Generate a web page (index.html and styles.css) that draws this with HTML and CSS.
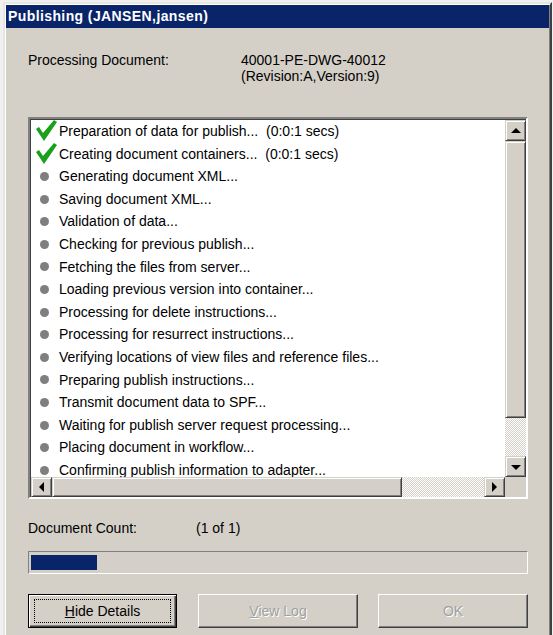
FILE: index.html
```html
<!DOCTYPE html>
<html>
<head>
<meta charset="utf-8">
<link rel="stylesheet" href="styles.css">
</head>
<body>
<div class="window">
  <div class="titlebar">Publishing (JANSEN,jansen)</div>
  <div class="content">
    <div class="doc-row">
      <div class="label">Processing Document:</div>
      <div class="value">40001-PE-DWG-40012<br>(Revision:A,Version:9)</div>
    </div>
    <div class="listbox">
      <div class="list-area">
        <ul class="items">
          <li><span class="ico"><svg width="22" height="22" viewBox="0 0 22 22"><polygon points="0,9 3,7 7,13 18,0 21,2 8,21" fill="#1aa01a"/></svg></span>Preparation of data for publish...&nbsp;&nbsp;(0:0:1 secs)</li>
          <li><span class="ico"><svg width="22" height="22" viewBox="0 0 22 22"><polygon points="0,9 3,7 7,13 18,0 21,2 8,21" fill="#1aa01a"/></svg></span>Creating document containers...&nbsp;&nbsp;(0:0:1 secs)</li>
          <li><span class="ico"><span class="dot"></span></span>Generating document XML...</li>
          <li><span class="ico"><span class="dot"></span></span>Saving document XML...</li>
          <li><span class="ico"><span class="dot"></span></span>Validation of data...</li>
          <li><span class="ico"><span class="dot"></span></span>Checking for previous publish...</li>
          <li><span class="ico"><span class="dot"></span></span>Fetching the files from server...</li>
          <li><span class="ico"><span class="dot"></span></span>Loading previous version into container...</li>
          <li><span class="ico"><span class="dot"></span></span>Processing for delete instructions...</li>
          <li><span class="ico"><span class="dot"></span></span>Processing for resurrect instructions...</li>
          <li><span class="ico"><span class="dot"></span></span>Verifying locations of view files and reference files...</li>
          <li><span class="ico"><span class="dot"></span></span>Preparing publish instructions...</li>
          <li><span class="ico"><span class="dot"></span></span>Transmit document data to SPF...</li>
          <li><span class="ico"><span class="dot"></span></span>Waiting for publish server request processing...</li>
          <li><span class="ico"><span class="dot"></span></span>Placing document in workflow...</li>
          <li><span class="ico"><span class="dot"></span></span>Confirming publish information to adapter...</li>
        </ul>
      </div>
      <div class="vscroll">
        <div class="sbtn"><span class="arr up"></span></div>
        <div class="vthumb"></div>
        <div class="track"></div>
        <div class="sbtn"><span class="arr down"></span></div>
      </div>
      <div class="hscroll">
        <div class="sbtn"><span class="arr left"></span></div>
        <div class="hthumb"></div>
        <div class="track"></div>
        <div class="sbtn"><span class="arr right"></span></div>
      </div>
      <div class="corner"></div>
    </div>
    <div class="count-row">
      <div class="label2">Document Count:</div>
      <div>(1 of 1)</div>
    </div>
    <div class="progress"><div class="fill"></div></div>
    <div class="buttons">
      <div class="btn default btn-hide"><span class="focus"><u>H</u>ide Details</span></div>
      <div class="btn disabled btn-log"><span><u>V</u>iew Log</span></div>
      <div class="btn disabled btn-ok"><span>OK</span></div>
    </div>
  </div>
</div>
</body>
</html>
```
FILE: styles.css
```css
html, body {
  margin: 0;
  padding: 0;
  background: #f0f0f0;
  overflow: hidden;
}
body {
  font-family: "Liberation Sans", Arial, sans-serif;
  font-size: 14px;
  color: #000;
}
.window {
  margin: 2px 0 0 3px;
  width: 543px;
  height: 650px;
  background: #d4d0c8;
  border: 2px solid;
  border-color: #e8e6e0 #404040 #404040 #e8e6e0;
  box-shadow: inset 1px 1px #fff, inset -1px -1px #808080;
  padding: 1px;
}
.titlebar {
  height: 23px;
  background: #0a246a;
  color: #fff;
  font-weight: bold;
  font-size: 14px;
  letter-spacing: 0.4px;
  line-height: 23px;
  padding-left: 2px;
}
.content {
  padding: 24px 21px 0 22px;
  display: flex;
  flex-direction: column;
}
.doc-row {
  display: flex;
  line-height: 16px;
}
.label {
  width: 213px;
}
.listbox {
  margin-top: 33px;
  height: 377px;
  border: 2px solid;
  border-color: #808080 #fff #fff #808080;
  box-shadow: inset 1px 1px #404040;
  padding: 1px 0 0 1px;
  display: grid;
  grid-template-columns: 1fr 21px;
  grid-template-rows: 1fr 20px;
  box-sizing: content-box;
}
.list-area {
  background: #fff;
  overflow: hidden;
}
.items {
  list-style: none;
  margin: 0;
  padding: 0;
}
.items li {
  height: 22.6px;
  line-height: 22.6px;
  display: flex;
  align-items: center;
  white-space: nowrap;
}
.ico {
  width: 28px;
  height: 22px;
  display: flex;
  align-items: center;
  padding-left: 5px;
  box-sizing: border-box;
}
.dot {
  width: 9px;
  height: 9px;
  border-radius: 50%;
  background: #7f7f7f;
  margin-left: 4px;
}
.vscroll {
  display: flex;
  flex-direction: column;
}
.hscroll {
  display: flex;
}
.sbtn {
  width: 21px;
  height: 21px;
  box-sizing: border-box;
  background: #d4d0c8;
  border: 1px solid;
  border-color: #d4d0c8 #404040 #404040 #d4d0c8;
  box-shadow: inset 1px 1px #fff, inset -1px -1px #808080;
  display: flex;
  align-items: center;
  justify-content: center;
  flex: none;
}
.hscroll .sbtn {
  height: 20px;
}
.vthumb {
  height: 277px;
  box-sizing: border-box;
  background: #d4d0c8;
  border: 1px solid;
  border-color: #d4d0c8 #404040 #404040 #d4d0c8;
  box-shadow: inset 1px 1px #fff, inset -1px -1px #808080;
  flex: none;
}
.hthumb {
  width: 350px;
  box-sizing: border-box;
  background: #d4d0c8;
  border: 1px solid;
  border-color: #d4d0c8 #404040 #404040 #d4d0c8;
  box-shadow: inset 1px 1px #fff, inset -1px -1px #808080;
  flex: none;
}
.track {
  flex: 1;
  background: repeating-conic-gradient(#fff 0 25%, #d4d0c8 0 50%) 0 0 / 2px 2px;
}
.corner {
  background: #d4d0c8;
}
.arr {
  width: 0;
  height: 0;
  border: 5px solid transparent;
}
.arr.up { border-bottom: 5px solid #000; border-top-width: 0; margin-top: -1px; }
.arr.down { border-top: 5px solid #000; border-bottom-width: 0; margin-top: 1px; }
.arr.left { border-right: 5px solid #000; border-left-width: 0; }
.arr.right { border-left: 5px solid #000; border-right-width: 0; }
.count-row {
  display: flex;
  line-height: 16px;
  margin-top: 21px;
}
.label2 {
  width: 168px;
}
.progress {
  margin-top: 15px;
  height: 23px;
  box-sizing: border-box;
  border: 1px solid;
  border-color: #808080 #fff #fff #808080;
  padding: 3px 2px;
}
.fill {
  width: 66px;
  height: 100%;
  background: #0a246a;
}
.buttons {
  display: flex;
  margin-top: 20px;
}
.btn {
  height: 34px;
  box-sizing: border-box;
  border: 1px solid;
  border-color: #fff #404040 #404040 #fff;
  box-shadow: inset -1px -1px #808080;
  display: flex;
  align-items: center;
  justify-content: center;
  flex: none;
}
.btn-hide { width: 149px; }
.btn-log { width: 160px; margin-left: 21px; }
.btn-ok { width: 150px; margin-left: 20px; }
.btn.default {
  border: 1px solid #000;
  box-shadow: inset 1px 1px #fff, inset -1px -1px #404040, inset -2px -2px #808080;
  padding: 4px 5px;
}
.focus {
  width: 100%;
  height: 100%;
  border: 1px dotted #000;
  box-sizing: border-box;
  display: flex;
  align-items: center;
  justify-content: center;
}
.btn.disabled {
  color: #a0a0a0;
  text-shadow: 1px 1px #fff;
}
```
